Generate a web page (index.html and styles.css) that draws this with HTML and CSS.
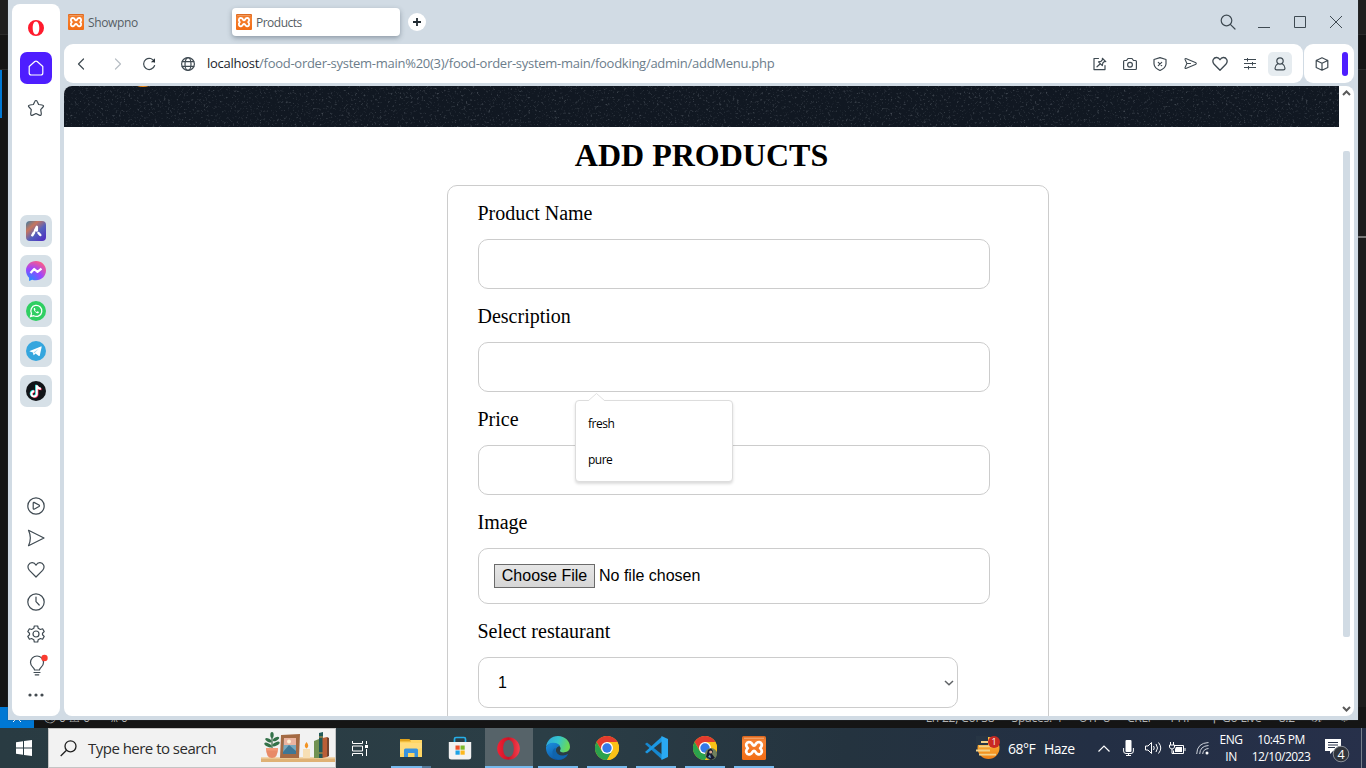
FILE: index.html
```html
<!DOCTYPE html>
<html lang="en">
<head>
<meta charset="utf-8">
<title>Products</title>
<link rel="stylesheet" href="styles.css">
</head>
<body>
<svg width="0" height="0" class="defs">
  <defs>
    <linearGradient id="xg" x2="0" y2="1"><stop offset="0" stop-color="#d9641c"/><stop offset=".2" stop-color="#f58233"/><stop offset="1" stop-color="#f26c14"/></linearGradient>
    <symbol id="xampp" viewBox="0 0 24 24">
      <rect width="24" height="24" rx="1.6" fill="url(#xg)"/>
      <path d="M2 2.2h20" stroke="#f9b27c" stroke-width="1"/>
      <path d="M8.300 6.300C4.300 5 2.900 9.600 5.800 12.200C2.900 14.800 4.300 19.400 8.300 18.100C10.600 17.300 10.200 14.800 12 14.800S13.400 17.300 15.700 18.100C19.700 19.400 21.100 14.800 18.200 12.200C21.100 9.600 19.700 5 15.700 6.300C13.400 7.100 13.800 9.600 12 9.600S10.600 7.100 8.300 6.300Z" fill="none" stroke="#fff" stroke-width="2.700" stroke-linejoin="round"/>
    </symbol>
    <symbol id="chrome" viewBox="0 0 24 24">
      <circle cx="12" cy="12" r="12" fill="#fbc116"/>
      <path d="M12 6h10.400A12 12 0 0 0 1.600 6L7 15Z" fill="#e33b2e"/>
      <path d="M1.600 6A12 12 0 0 0 12 24L17.200 15L12 17.500L6.800 15Z" fill="#2ba24c"/>
      <path d="M22.400 6H12l5.200 9L12 24A12 12 0 0 0 22.400 6Z" fill="#fbc116"/>
      <circle cx="12" cy="12" r="6" fill="#fff"/><circle cx="12" cy="12" r="4.700" fill="#3479e8"/>
    </symbol>
    <symbol id="heart" viewBox="0 0 18 18"><path d="M9 16L2.400 9.300C-.8 5.500 2.100 1.500 5.300 1.700C7.200 1.800 8.300 3 9 4.200C9.700 3 10.800 1.800 12.700 1.700C15.900 1.500 18.800 5.500 15.600 9.300Z"/></symbol>
    <symbol id="send" viewBox="0 0 18 18"><path d="M1.500 1.300L17 9L1.500 16.700Q5.200 9 1.500 1.300Z"/></symbol>
  </defs>
</svg>

<div class="desktop">
  <div class="editor">
    <div class="editor-tabs"></div>
    <div class="editor-tools"></div>
    <div class="editor-body"><i class="active-mark"></i><i class="ruler-mark"></i></div>
    <div class="status">
      <span class="remote"><svg width="10" height="10" viewBox="0 0 10 10"><path d="M1 1l4 4-4 4M9 1L5 5l4 4" stroke="#fff" fill="none"/></svg></span>
      <span class="problems">ⓧ 0 ⚠ 0</span><span class="ports">⩚ 0</span>
      <span class="status-right"><span>Ln 22, Col 38</span><span>Spaces: 4</span><span>UTF-8</span><span>CRLF</span><span>PHP</span><span>⚲ Go Live</span><span>8.2</span><span>ℛ</span><span>♤</span></span>
    </div>
  </div>

  <div class="browser">
    <aside class="side">
      <span class="slot"><svg width="16" height="16" viewBox="0 0 16 16"><path fill="#ff1b2d" fill-rule="evenodd" d="M8 0a8 8 0 1 0 0 16A8 8 0 0 0 8 0Zm0 1.600c2.200 0 3.300 3 3.300 6.400S10.200 14.400 8 14.400S4.700 11.500 4.700 8S5.800 1.600 8 1.600Z"/></svg></span>
      <span class="slot home"><svg class="line" width="16" height="16" viewBox="0 0 16 16"><path d="M1.200 6.500L6.800 1.500Q8 .6 9.200 1.500L14.800 6.500V13Q14.800 15 12.800 15H3.200Q1.200 15 1.200 13Z"/></svg></span>
      <span class="slot"><svg class="line" width="18" height="18" viewBox="0 0 18 18"><path d="M9 1.500Q9.800 1.500 10.200 2.500L11.600 5.500L15 6Q17.500 6.400 16 8L13.700 10.600L14.300 14.500Q14.400 17.100 12.300 16.100L9 14.500L5.700 16.100Q3.600 17.100 3.700 14.500L4.300 10.600L2 8Q.5 6.400 3 6L6.400 5.500L7.800 2.500Q8.200 1.500 9 1.500Z"/></svg></span>
      <div class="apps">
        <span class="slot chip"><svg width="20" height="20" viewBox="0 0 20 20"><defs><linearGradient id="ar" x2=".9" y2="1"><stop offset="0" stop-color="#3a7da4"/><stop offset=".3" stop-color="#c7765e"/><stop offset=".6" stop-color="#5360bd"/><stop offset="1" stop-color="#502cc2"/></linearGradient></defs><rect width="20" height="20" rx="4" fill="url(#ar)"/><path d="M10.800 6L9 9.500M8 11.500L6.300 14.300M10.800 6V9.500M12.500 12L14.300 14" stroke="#fff" stroke-width="2.500" stroke-linecap="round"/></svg></span>
        <span class="slot chip"><svg width="20" height="20" viewBox="0 0 20 20"><defs><radialGradient id="ms" cx=".2" cy="1" r="1.100"><stop offset="0" stop-color="#1b8cff"/><stop offset=".55" stop-color="#9b45ff"/><stop offset="1" stop-color="#ff5c85"/></radialGradient></defs><path fill="url(#ms)" d="M10 0C4.400 0 0 4.100 0 9.600c0 2.900 1.200 5.400 3.100 7.100V20l3-1.300c1.200.4 2.500.6 3.900.6c5.600 0 10-4.200 10-9.700S15.600 0 10 0Z"/><path d="M4.500 12L8.200 8L11.500 10.800L15.500 7.600" fill="none" stroke="#fff" stroke-width="2.200" stroke-linejoin="round"/></svg></span>
        <span class="slot chip"><svg width="20" height="20" viewBox="0 0 20 20"><circle cx="10" cy="10" r="10" fill="#2fcf62"/><path d="M4.600 15.500L5.500 12.500A5.500 5.500 0 1 1 7.700 14.700Z" fill="none" stroke="#fff" stroke-width="1.300"/><path d="M8 7C6.900 8.800 9.700 12.300 12 12.300Q13 12.100 12.900 11L11.500 10.300L10.700 11.100Q9.400 10.500 9 9.400L9.500 8.600L8.900 7.100Z" fill="#fff"/></svg></span>
        <span class="slot chip"><svg width="20" height="20" viewBox="0 0 20 20"><circle cx="10" cy="10" r="10" fill="#35a6de"/><path fill="#fff" d="M3.700 10L14.900 5.400Q15.800 5.200 15.600 6.200L13.800 14.500Q13.500 15.400 12.500 14.800L9.500 12.600L8 14.100Q7.400 14.300 7.400 13.600L6.900 11.400L3.900 10.600Q3.100 10.400 3.700 10Z"/><path d="M7.400 11.500L12.800 7.800L8.600 12Z" fill="#9bd2ee"/></svg></span>
        <span class="slot chip"><svg width="20" height="20" viewBox="0 0 20 20"><circle cx="10" cy="10" r="10" fill="#111418"/><g fill="none" stroke-width="2"><path d="M10.100 3.700V12.400A2.700 2.700 0 1 1 7.500 9.700M10.100 4Q10.800 7 14.200 7.300" stroke="#25e5df"/><path d="M11.500 4.700V13.300A2.700 2.700 0 1 1 8.900 10.600M11.500 5Q12.200 8 15.600 8.300" stroke="#fb2b58"/><path d="M10.800 4.200V12.900A2.700 2.700 0 1 1 8.200 10.200M10.800 4.500Q11.500 7.500 14.900 7.800" stroke="#fff"/></g></svg></span>
      </div>
      <div class="tools">
        <span class="slot"><svg class="line" width="18" height="18" viewBox="0 0 18 18"><circle cx="9" cy="9" r="8.200"/><path d="M6.200 6Q6.200 5.200 7 5.400L12 8Q13 8.700 12 9.400L7.500 12Q6.200 12.600 6.200 11.500Z"/></svg></span>
        <span class="slot"><svg class="line" width="18" height="18"><use href="#send"/></svg></span>
        <span class="slot"><svg class="line" width="18" height="18"><use href="#heart"/></svg></span>
        <span class="slot"><svg class="line" width="18" height="18" viewBox="0 0 18 18"><circle cx="9" cy="9" r="8.200"/><path d="M9 4V8.700L12.200 12"/></svg></span>
        <span class="slot"><svg class="line" width="18" height="18" viewBox="0 0 18 18"><path d="M7.300 1H10.700L11.200 3.300L13.400 4.500L15.600 3.800L17.200 6.600L15.500 8.200V9.800L17.200 11.400L15.600 14.200L13.400 13.500L11.200 14.700L10.700 17H7.300L6.800 14.700L4.600 13.500L2.400 14.200L.8 11.400L2.500 9.800V8.200L.8 6.600L2.400 3.800L4.600 4.500L6.800 3.300Z"/><circle cx="9" cy="9" r="3"/></svg></span>
        <span class="slot"><svg class="line bulb" width="22" height="22" viewBox="0 0 22 22"><path d="M9.500 15C9.500 12.500 5.500 12 5.500 7.500A6.500 6.500 0 0 1 18.500 7.500C18.500 12 14.500 12.500 14.500 15ZM9 17.500H15M10.200 19.800H13.800"/><circle cx="19.500" cy="3" r="3.200" fill="#fb3b30" stroke="none"/></svg></span>
        <span class="slot more"><svg width="16" height="4"><g fill="#434a50"><circle cx="2" cy="2" r="1.600"/><circle cx="8" cy="2" r="1.600"/><circle cx="14" cy="2" r="1.600"/></g></svg></span>
      </div>
    </aside>

    <div class="main">
      <div class="tabs">
        <div class="tab"><svg width="16" height="16"><use href="#xampp"/></svg><span class="t-show">Showpno</span></div>
        <div class="tab active"><svg width="16" height="16"><use href="#xampp"/></svg><span class="t-prod">Products</span></div>
        <span class="plus"><svg width="18" height="18"><circle cx="9" cy="9" r="9" fill="#fff"/><path d="M9 5V13M5 9H13" stroke="#202a31" stroke-width="1.800"/></svg></span>
        <div class="controls">
          <span><svg class="line" width="16" height="16" viewBox="0 0 16 16"><circle cx="6.500" cy="6.500" r="5.300"/><path d="M10.300 10.300L15 15"/></svg></span>
          <span><svg class="line sharp" width="12" height="12"><path d="M0 11.500H12"/></svg></span>
          <span><svg class="line sharp" width="12" height="12"><path d="M.5 .5H11.500V11.500H.5Z"/></svg></span>
          <span><svg class="line sharp" width="12" height="12"><path d="M0 0L12 12M12 0L0 12"/></svg></span>
        </div>
      </div>

      <div class="toolbar">
        <div class="address">
          <span class="nav back"><svg class="line" width="8" height="12" viewBox="0 0 8 12"><path d="M6.500 1L1.500 6L6.500 11"/></svg></span>
          <span class="nav fwd"><svg class="line" width="8" height="12" viewBox="0 0 8 12"><path d="M1.500 1L6.500 6L1.500 11"/></svg></span>
          <span class="nav reload"><svg class="line" width="14" height="14" viewBox="0 0 14 14"><path d="M12.500 5A5.600 5.600 0 1 0 12.600 8.500"/><path d="M13 1.200V5.300H8.900Z" fill="#29333a" stroke="none"/></svg></span>
          <span class="nav globe"><svg class="line" width="14" height="14" viewBox="0 0 14 14"><circle cx="7" cy="7" r="6.400"/><ellipse cx="7" cy="7" rx="3" ry="6.400"/><path d="M1.200 4.700H12.800M1.200 9.300H12.800"/></svg></span>
          <span class="url"><b>localhost</b>/food-order-system-main%20(3)/food-order-system-main/foodking/admin/addMenu.php</span>
          <div class="actions">
            <span><svg class="line" width="14" height="14" viewBox="0 0 14 14"><path d="M5.500 1.500H1V12.600H12V8.500M4 9.800L6.800 7.200M9.300 1.300L12.800 4.600M10 2L8 4.300L5.500 4.800L9.300 8.600L9.800 6L12 4"/></svg></span>
            <span><svg class="line" width="14" height="14" viewBox="0 0 14 14"><path d="M1.500 3.500H3.500L5 1.500H9L10.500 3.500H12.500Q13.400 3.500 13.400 4.400V11.500Q13.400 12.500 12.500 12.500H1.500Q.6 12.500 .6 11.500V4.400Q.6 3.500 1.500 3.500Z"/><circle cx="7" cy="7.700" r="2.400"/></svg></span>
            <span><svg class="line" width="14" height="14" viewBox="0 0 14 14"><path d="M7 .6L13 2.500V7Q12.500 11.200 7 13.500Q1.500 11.200 1 7V2.500Z"/><path d="M5.300 5.300L8.700 8.700M8.700 5.300L5.300 8.700"/></svg></span>
            <span><svg class="line plane" width="13" height="13" viewBox="0 0 18 18"><path d="M2.500 2L16.500 8Q17.500 9 16.500 10L2.500 16Q1 16 1.500 14.500L4 9L1.500 3.500Q1 2 2.500 2ZM4 9H9"/></svg></span>
            <span><svg class="line plane" width="16" height="16" viewBox="0 0 18 18"><use href="#heart"/></svg></span>
            <span><svg class="line sharp" width="12" height="12" viewBox="0 0 12 12"><path d="M0 1.500H12M0 5.500H12M0 9.500H12M3.500 0V3.500M8.500 4V7.500M4.500 8V11.500"/></svg></span>
            <span class="account"><svg class="line" width="12" height="14" viewBox="0 0 12 14"><circle cx="6" cy="4" r="3.200"/><path d="M3.700 6.700Q1 8.500 1 11.200Q1 12.900 2.700 12.900H9.300Q11 12.900 11 11.200Q11 8.500 8.300 6.700"/></svg></span>
          </div>
        </div>
        <div class="extension">
          <svg class="line" width="14" height="14" viewBox="0 0 14 14"><path d="M7 .8L12.800 3.500V10.500L7 13.200L1.200 10.500V3.500ZM1.200 3.500L7 6.300L12.800 3.500M7 6.300V13.200"/></svg>
          <i class="accent"></i>
        </div>
      </div>

      <div class="viewport">
        <div class="page">
          <div class="banner">
            <svg width="1275" height="41"><filter id="dust" x="0" y="0" width="1" height="1"><feTurbulence type="fractalNoise" baseFrequency=".45" numOctaves="4" seed="7"/><feColorMatrix values="0 0 0 0 .5  0 0 0 0 .55  0 0 0 0 .6  3 0 0 0 -1.750"/></filter><rect width="1275" height="41" filter="url(#dust)" opacity=".3"/><ellipse cx="79" cy="-3" rx="9" ry="4" fill="#f58a12"/></svg>
          </div>
          <h1>ADD PRODUCTS</h1>
          <form class="card">
            <label>Product Name</label>
            <input class="field" type="text">
            <label>Description</label>
            <input class="field" type="text">
            <label>Price</label>
            <input class="field" type="text">
            <label>Image</label>
            <div class="field file"><span class="choose">Choose File</span><span>No file chosen</span></div>
            <label>Select restaurant</label>
            <div class="field select"><span>1</span><svg width="10" height="6"><path d="M1 1L5 4.800L9 1" fill="none" stroke="#606366" stroke-width="1.500"/></svg></div>
          </form>
          <div class="suggest">
            <svg class="tip" width="18" height="8"><path d="M0 8L8.500 .5L17 8" fill="#fff" stroke="#e0e0e0"/></svg>
            <div>fresh</div><div>pure</div>
          </div>
        </div>
        <div class="scrollbar">
          <svg width="9" height="6"><path d="M1 5L4.500 1.500L8 5" fill="none" stroke="#5a5a5a" stroke-width="2"/></svg>
          <i class="thumb"></i>
          <svg width="9" height="6"><path d="M1 1L4.500 4.500L8 1" fill="none" stroke="#5a5a5a" stroke-width="2"/></svg>
        </div>
      </div>
    </div>
  </div>

  <footer class="taskbar">
    <span class="start"><svg width="16" height="16" viewBox="0 0 16 16"><path fill="#fff" d="M0 2.200L7 1.200V7.500H0ZM8 1L16 0V7.500H8ZM0 8.500H7V14.800L0 13.800ZM8 8.500H16V16L8 15Z"/></svg></span>
    <div class="search">
      <svg width="17" height="17" viewBox="0 0 17 17"><circle cx="10.500" cy="6.300" r="5.500" fill="none" stroke="#202020" stroke-width="1.300"/><path d="M6.500 10.300L.7 16" stroke="#202020" stroke-width="1.300"/></svg>
      <span class="hint">Type here to search</span>
      <svg class="shelf" width="74" height="32" viewBox="0 0 74 32">
        <path d="M0 26H74V30H0Z" fill="#dfb174"/><path d="M0 26H74" stroke="#efcc98" stroke-width="1.500"/>
        <path d="M11 18V3" stroke="#356443" stroke-width="1.200"/>
        <g fill="#34724a"><ellipse cx="7" cy="13" rx="4" ry="1.700" transform="rotate(25 7 13)"/><ellipse cx="15" cy="12" rx="4" ry="1.700" transform="rotate(-25 15 12)"/><ellipse cx="7.500" cy="8" rx="3.500" ry="1.600" transform="rotate(30 7 8)"/><ellipse cx="15" cy="7" rx="3.500" ry="1.600" transform="rotate(-30 15 7)"/><ellipse cx="11" cy="3" rx="1.700" ry="3"/></g>
        <path d="M5 16H17Q17 26 11 26Q5 26 5 16Z" fill="#e88a67"/><path d="M5 16H17V18.500H5Z" fill="#f39a78"/>
        <path d="M20 3L39 2L38 26H19Z" fill="#a46a43"/><path d="M23 6H35V22H22Z" fill="#78a9bd"/><path d="M23 6H35V13H23Z" fill="#ebb4a0"/><circle cx="28" cy="9.500" r="2" fill="#fff0d2"/><path d="M22 20L28 13L35 19V22H22Z" fill="#3e7795"/>
        <path d="M42 17H49V26H42Z" fill="#f7dfb4"/><path d="M45.500 10Q49 14 45.500 16.500Q42 14 45.500 10Z" fill="#f39423"/>
        <path d="M53 9L58 7V26H53Z" fill="#719252"/><path d="M58 1L62 0V26H58Z" fill="#225a58"/><path d="M58 5H62M58 21H62" stroke="#d19c42"/><path d="M61.500 6L66 5V25L61.500 26Z" fill="#ba5f37"/><path d="M66 5L68 6V24L66 25Z" fill="#75432d"/>
      </svg>
    </div>
    <span class="taskview"><svg width="16" height="15" viewBox="0 0 16 15"><path d="M.5 0V2.500H10.500V0M.5 15V12.500H10.500V15M.5 5H10.500V10H.5ZM14.500 0V3M14.500 8V15" fill="none" stroke="#fff"/><path d="M13 4H16V7H13Z" fill="#fff"/></svg></span>
    <div class="tasks">
      <span class="task run split"><svg width="22" height="20" viewBox="0 0 22 20"><path d="M0 2H22V19H0Z" fill="#ffd664"/><path d="M0 1H9.500L11 3.500H0Z" fill="#e1a31c"/><path d="M0 5H22V10L0 16Z" fill="#ffe08a" opacity=".6"/><path d="M4 19V12Q4 10.500 5.500 10.500H16.500Q18 10.500 18 12V19H14.500V15H8V19Z" fill="#3a93dd"/></svg></span>
      <span class="task"><svg width="24" height="24" viewBox="0 0 24 24"><path d="M6.500 7V3Q6.500 1.500 8 1.500H16Q17.500 1.500 17.500 3V7" fill="none" stroke="#26aee8" stroke-width="1.700"/><path d="M.8 6H23.200V21Q23.200 23.500 20.500 23.500H3.500Q.8 23.500 .8 21Z" fill="#f2f2f2"/><path d="M7.500 9.500H11.700V13.700H7.500Z" fill="#ef512a"/><path d="M12.500 9.500H16.700V13.700H12.500Z" fill="#7db928"/><path d="M7.500 14.500H11.700V18.700H7.500Z" fill="#1ba2e6"/><path d="M12.500 14.500H16.700V18.700H12.500Z" fill="#fdb81d"/></svg></span>
      <span class="task run focus"><svg width="23" height="23" viewBox="0 0 23 23"><defs><linearGradient id="op" x2="1"><stop stop-color="#f51f33"/><stop offset=".5" stop-color="#c91527"/><stop offset="1" stop-color="#f8404e"/></linearGradient></defs><path fill="url(#op)" fill-rule="evenodd" d="M11.500 .2A11.300 11.300 0 1 0 11.500 22.800A11.300 11.300 0 0 0 11.500 .2ZM11.500 3C15 3 16.800 7 16.800 11.500S15 20 11.500 20S6.200 16 6.200 11.500S8 3 11.500 3Z"/></svg></span>
      <span class="task run"><svg width="24" height="24" viewBox="0 0 24 24"><defs><linearGradient id="eg" x2="1" y2=".25"><stop stop-color="#2da4df"/><stop offset=".55" stop-color="#35c5cb"/><stop offset="1" stop-color="#69d958"/></linearGradient><linearGradient id="eb" x2=".7" y2="1"><stop stop-color="#1b91e0"/><stop offset="1" stop-color="#0c4f9c"/></linearGradient></defs><path fill="url(#eg)" d="M0 11C.8 4.500 5.500 0 12 0C19 0 24 5 24 11C24 17 14.500 17.500 14 15C14 13.500 16 12.500 13 9.500C9.500 6 2.500 7 0 11Z"/><path fill="url(#eb)" d="M0 11Q3 5.500 9.500 7C13 8 14 9.500 14 10C10.500 10.500 9 13.500 10.500 16.500C13 21 18.500 20.500 22 18C20 22 16 24 12 24C5 24-.5 18 0 11Z"/><path d="M9.700 12C8.500 18 14 22 22 18C19 24 12 25 8.500 21.500C5 18 6.500 12.500 9.700 12Z" fill="#1064ad"/></svg></span>
      <span class="task run"><svg width="24" height="24"><use href="#chrome"/></svg></span>
      <span class="task run"><svg width="24" height="24" viewBox="0 0 24 24"><path d="M1 8L3 6.500L18 18.500V23.500Z" fill="#1688d0"/><path d="M1 16L3 17.500L18 5.500V.5Z" fill="#1c98e2"/><path d="M17.500 0L24 3V21L17.500 24Z" fill="#2aa9f2"/></svg></span>
      <span class="task run"><svg width="24" height="24" viewBox="0 0 24 24"><use href="#chrome"/><circle cx="18" cy="18" r="6" fill="#71815d"/><path d="M13 21L15 14L18 12.500L20 15L19 18L22 22L18 24Z" fill="#171c30"/><circle cx="17.700" cy="16" r="1.500" fill="#d6a58d"/><path d="M15 21L17 18.500L18 22Z" fill="#6b9dd1"/></svg></span>
      <span class="task run"><svg width="24" height="24"><use href="#xampp"/></svg></span>
    </div>
    <div class="tray">
      <span class="weather"><svg width="26" height="24" viewBox="0 0 26 24"><defs><linearGradient id="sun" x2="0" y2="1"><stop stop-color="#ffc441"/><stop offset="1" stop-color="#ef7f16"/></linearGradient></defs><circle cx="12.500" cy="12" r="11" fill="url(#sun)"/><path d="M0 0H12V9H0Z" fill="#273544"/><path d="M5 6H13M3 10.300H17M0 14.500H14M3 18.700H20" stroke="#f3d189" stroke-width="1.800"/><circle cx="18" cy="6" r="6" fill="#c92a22"/><text x="18" y="9.300" text-anchor="middle" font-size="9" fill="#fff">1</text></svg></span>
      <span class="temp">68°F</span><span class="haze">Haze</span>
      <span class="center"><svg width="12" height="7"><path d="M.5 6.500L6 1L11.500 6.500" fill="none" stroke="#fff" stroke-width="1.200"/></svg></span>
      <span class="center"><svg width="11" height="16" viewBox="0 0 11 16"><rect x="2.500" width="6" height="12" rx="1" fill="#fff"/><path d="M.6 8V11Q.6 13.500 3 13.500H8Q10.400 13.500 10.400 11V8M5.500 13.500V15.500M3 15.500H8" fill="none" stroke="#fff"/></svg></span>
      <span class="center"><svg width="17" height="14" viewBox="0 0 17 14" fill="none" stroke="#fff"><path d="M.5 5H3L6.500 1.500V12.500L3 9H.5ZM8.500 5Q10 7 8.500 9M11 3Q14 7 11 11M13.500 1.500Q18 7 13.500 12.500"/></svg></span>
      <span class="center"><svg width="17" height="13" viewBox="0 0 17 13" fill="none" stroke="#fff"><path d="M6 3.500H14.500V11.500H4.500V8.500M16 6V9M1.500 0V3M4.500 0V3M.5 3H5.500V5Q5 7 3 7Q1 7 .5 5ZM3 7V11.500H5"/><path d="M7 5H13V10H6V7Z" fill="#fff" stroke="none"/></svg></span>
      <span class="center"><svg width="13" height="14" viewBox="0 0 13 14" fill="none" stroke="#cfd4dc"><path d="M.7 13Q1 2 12.500 1.500M3.700 13Q4 5 12.500 4.500M6.700 13Q7 8 12.500 7.500"/><circle cx="11" cy="12" r="1.500" fill="#fff" stroke="none"/></svg></span>
      <span class="two lang"><span>ENG</span><span>IN</span></span>
      <span class="two clock"><span>10:45 PM</span><span class="date">12/10/2023</span></span>
      <span class="notice"><svg width="26" height="26" viewBox="0 0 26 26"><path d="M0 1H16V13H8L5 16V13H0Z" fill="#fff"/><path d="M3 4.500H13M3 7H13M3 9.500H10" stroke="#273149"/><circle cx="16" cy="16" r="7.800" fill="#30343b" stroke="#8b9098"/><text x="16" y="20.500" text-anchor="middle" font-size="12.500" fill="#fff">4</text></svg></span>
      <i class="peek"></i>
    </div>
  </footer>
</div>
</body>
</html>
```
FILE: styles.css
```css
* { box-sizing: border-box; }
body { margin: 0; overflow: hidden; font-family: "Open Sans", "Noto Sans", sans-serif; }
svg { display: block; flex: none; }
i { display: block; }
.defs { position: absolute; }
.desktop { position: relative; width: 1366px; height: 768px; display: flex; flex-direction: column; background: #181818; }

/* Editor window behind the browser */
.editor { height: 728px; display: flex; flex-direction: column; }
.editor-tabs { height: 35px; background: #1f1f1f; border-bottom: 1px solid #2b2b2b; }
.editor-tools { height: 35px; background: #151515; border-bottom: 1px solid #2b2b2b; }
.editor-body { flex: 1; display: flex; justify-content: space-between; background: linear-gradient(90deg, #151515 50%, #1d1d1d 50%); }
.active-mark { width: 2px; height: 48px; background: #0078d4; }
.ruler-mark { width: 8px; height: 2px; margin-top: 166px; background: #777; }
.status { height: 21px; display: flex; align-items: center; font-size: 12px; line-height: 21px; color: #b4b4b4; background: #151515; white-space: nowrap; }
.remote { width: 34px; height: 21px; display: flex; align-items: center; justify-content: center; background: #0078d4; }
.problems { margin-left: 10px; width: 67px; }
.status-right { margin-left: auto; padding-right: 16px; display: flex; gap: 17px; letter-spacing: -.2px; }

/* Browser window */
.browser { position: absolute; left: 8px; top: 0; width: 1350px; height: 720px; padding: 0 4px 4px; display: flex; gap: 4px; background: #d1dbe4; box-shadow: 0 0 1px #3c4a52; }
.side { width: 48px; margin-top: 4px; padding-top: 8px; display: flex; flex-direction: column; align-items: center; gap: 8px; background: #fff; border-radius: 8px; }
.slot { width: 32px; height: 32px; display: flex; align-items: center; justify-content: center; }
.line { fill: none; stroke: #3f4a52; stroke-width: 1.2; stroke-linecap: round; stroke-linejoin: round; }
.plane { stroke-width: 1.5; }
.sharp { stroke-linecap: butt; stroke-linejoin: miter; stroke-width: 1; }
.bulb { overflow: visible; }
.home { background: #4e1eff; border-radius: 7px; }
.home .line { stroke: #fff; }
.apps { margin-top: 83px; display: flex; flex-direction: column; gap: 8px; }
.chip { background: #d6e0e7; border-radius: 7px; }
.tools { margin-top: 75px; padding-right: 1px; }
.more { height: 26px; }
.main { flex: 1; min-width: 0; display: flex; flex-direction: column; }

.tabs { height: 44px; display: flex; align-items: center; }
.tab { width: 168px; height: 28px; padding: 0 4px; display: flex; align-items: center; gap: 4px; font-size: 12px; color: #565e64; border-radius: 4px; }
.t-show { letter-spacing: -.35px; }
.t-prod { letter-spacing: -.5px; }
.active { background: #fff; box-shadow: 0 2px 5px rgba(60, 75, 90, .45); }
.plus { margin-left: 8px; }
.controls { margin-left: auto; display: flex; }
.controls span { width: 36px; display: flex; align-items: center; justify-content: center; }

.toolbar { height: 39px; display: flex; gap: 1px; }
.address { width: 1239px; display: flex; align-items: center; background: #fff; border-radius: 9px; padding-right: 8px; }
.nav { display: flex; justify-content: center; }
.back { width: 34px; }
.fwd { width: 40px; }
.fwd .line { stroke: #b8bfc5; }
.reload { width: 22px; }
.globe { width: 56px; }
.url { margin-left: -9px; margin-top: -2px; font-size: 13px; letter-spacing: -.27px; color: #6c7d8b; white-space: nowrap; }
.url b { font-weight: 400; color: #1c252b; }
.actions { margin-left: auto; display: flex; align-items: center; }
.actions span { width: 30px; display: flex; align-items: center; justify-content: center; }
.actions .account { width: 24px; height: 24px; margin: 0 3px; background: #e6ecf0; border-radius: 5px; }
.extension { width: 50px; padding: 0 6px 0 11px; display: flex; align-items: center; justify-content: space-between; background: #fff; border-radius: 9px; }
.accent { width: 6px; height: 24px; border-radius: 3px; background: #4e1eff; }

.viewport { flex: 1; min-height: 0; margin-top: 3px; display: flex; background: #fff; border-radius: 8px; overflow: hidden; }
.page { position: relative; width: 1275px; overflow: hidden; font-family: "Liberation Serif", serif; color: #000; }
.banner { height: 41px; background: #111822; }
h1 { margin: 0; height: 58px; line-height: 56px; font-size: 32px; text-align: center; font-weight: 700; }
.card { width: 602px; height: 640px; margin-left: 383px; padding-left: 30px; display: flex; flex-direction: column; border: 1px solid #ccc; border-radius: 10px; }
.card label { height: 53px; line-height: 55px; font-size: 20px; text-indent: -.5px; }
.field { width: 512px; height: 50px; margin: 0; border: 1px solid #ccc; border-radius: 10px; background: #fff; outline: 0; font: 16px "Liberation Sans", Arial, sans-serif; flex: none; }
.file { height: 56px; padding-left: 15px; display: flex; align-items: center; gap: 4px; }
.choose { width: 101px; height: 24px; line-height: 22px; text-align: center; border: 1px solid #6b6b6b; background: linear-gradient(#e6e6e6, #d6d6d6); }
.select { width: 480px; height: 51px; padding: 0 3px 0 19px; display: flex; align-items: center; justify-content: space-between; }
.suggest { position: absolute; left: 511px; top: 314px; width: 158px; height: 82px; padding: 5px 12px; border: 1px solid #ddd; border-radius: 4px; background: #fff; box-shadow: 0 2px 3px rgba(0, 0, 0, .14); font: 12px "Open Sans", sans-serif; letter-spacing: -.5px; }
.suggest div { height: 36px; line-height: 35px; }
.tip { position: absolute; left: 12px; top: -8px; }
.scrollbar { width: 15px; padding: 4px 0; display: flex; flex-direction: column; align-items: center; }
.thumb { width: 7px; height: 486px; margin: 55px 0 auto; border-radius: 2px; background: #d1dbe4; }

/* Taskbar */
.taskbar { height: 40px; display: flex; background: linear-gradient(90deg, #293b42, #2b3e46 40%, #24333f 62%, #232f44 80%, #27304a); color: #fff; white-space: nowrap; }
.start, .taskview { width: 48px; display: flex; align-items: center; justify-content: center; }
.search { width: 288px; padding-left: 11px; display: flex; align-items: center; background: #f2f2f2; border: 1px solid #c4c4c4; }
.hint { margin-left: 11px; font-size: 15px; letter-spacing: -.52px; color: #2c2c2c; }
.shelf { margin-left: auto; }
.tasks { display: flex; margin-left: 2px; }
.task { width: 49px; display: flex; align-items: center; justify-content: center; }
.run { background: linear-gradient(#76b9ed, #76b9ed) center bottom / 40px 2px no-repeat; }
.split { background: linear-gradient(90deg, #76b9ed 31px, #527999 31px) center bottom / 40px 2px no-repeat; }
.focus { background: linear-gradient(#76b9ed, #76b9ed) center bottom / 48px 2px no-repeat, linear-gradient(#566369, #566369) center / 48px 40px no-repeat; }
.tray { margin-left: auto; display: grid; grid-template-columns: 32px 36px 48px 24px 25px 24px 24px 26px 32px 68px 46px 5px; align-items: center; }
.temp, .haze { font-size: 14px; letter-spacing: -.5px; }
.center { display: flex; justify-content: center; }
.two { display: flex; flex-direction: column; align-items: center; font-size: 12px; line-height: 17px; letter-spacing: -.5px; }
.notice { padding-left: 10px; padding-top: 6px; }
.peek { height: 40px; border-left: 1px solid #77808c; }
```
